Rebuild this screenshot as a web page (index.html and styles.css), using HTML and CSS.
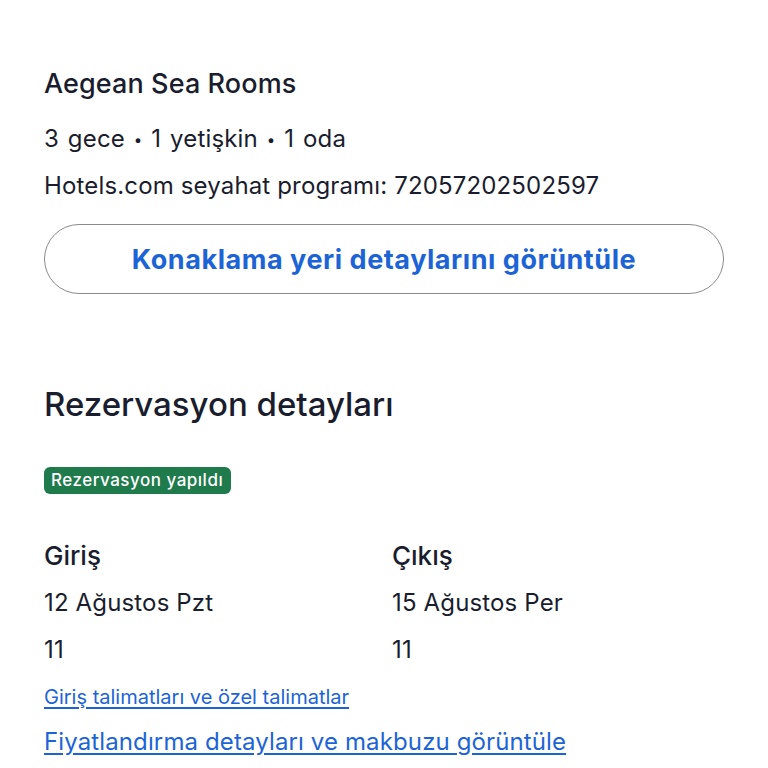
FILE: index.html
```html
<!DOCTYPE html>
<html lang="tr">

<head>
    <title>Rezervasyon | Aegean Sea Rooms</title>
    <meta name="viewport" content="width=device-width, initial-scale=1">
    <link rel="stylesheet" href="styles.css">
</head>

<body>

    <div class="page">
        <div class="stay">
            <h1 class="hotel-name">Aegean Sea Rooms</h1>
            <p class="stay-summary">3 gece <span class="dot">&bull;</span> 1 yetişkin <span class="dot">&bull;</span> 1 oda</p>
            <p class="itinerary">Hotels.com seyahat programı: 72057202502597</p>
            <button type="button" class="outline-button">Konaklama yeri detaylarını görüntüle</button>
        </div>

        <div class="booking">
            <h2 class="section-title">Rezervasyon detayları</h2>
            <span class="status-badge">Rezervasyon yapıldı</span>

            <div class="dates-grid">
                <div class="date-col">
                    <div class="date-label">Giriş</div>
                    <div class="date-value">12 Ağustos Pzt</div>
                    <div class="date-value">11</div>
                </div>
                <div class="date-col">
                    <div class="date-label">Çıkış</div>
                    <div class="date-value">15 Ağustos Per</div>
                    <div class="date-value">11</div>
                </div>
            </div>

            <a href="#" class="link small-link">Giriş talimatları ve özel talimatlar</a>
            <a href="#" class="link big-link">Fiyatlandırma detayları ve makbuzu görüntüle</a>
        </div>
    </div>

</body>

</html>
```

FILE: styles.css
```css
body {
    margin: 0;
    background-color: #fff;
    color: #1a1d2e;
    font-family: Inter, "Noto Sans", sans-serif;
}

.page {
    padding: 62px 44px 0 44px;
}

.hotel-name {
    margin: 0;
    font-size: 27px;
    font-weight: 500;
    line-height: 44px;
    letter-spacing: 0.1px;
}

.stay-summary,
.itinerary {
    margin: 0;
    font-size: 24px;
    line-height: 46px;
    letter-spacing: 0.15px;
}

.stay-summary {
    margin-top: 10px;
    word-spacing: 2px;
}

.dot {
    font-size: 15px;
    vertical-align: 2px;
}

.outline-button {
    display: block;
    width: 100%;
    height: 70px;
    margin-top: 15px;
    background-color: #fff;
    border: 1.5px solid #8a8a8e;
    border-radius: 35px;
    color: #1c64d6;
    font-family: inherit;
    font-size: 27px;
    font-weight: 700;
    letter-spacing: 0.55px;
    cursor: pointer;
}

.section-title {
    margin: 88px 0 0 0;
    font-size: 33px;
    font-weight: 500;
    line-height: 44px;
}

.status-badge {
    display: inline-block;
    margin-top: 41px;
    padding: 0 8px 0 7px;
    height: 27px;
    line-height: 27px;
    background-color: #1f7a4c;
    border-radius: 6px;
    color: #fff;
    font-size: 17px;
    font-weight: 500;
    letter-spacing: 0.5px;
}

.dates-grid {
    display: grid;
    grid-template-columns: 348px auto;
    margin-top: 38px;
}

.date-label {
    font-size: 26px;
    font-weight: 500;
    line-height: 47px;
}

.date-value {
    font-size: 24px;
    line-height: 47px;
    letter-spacing: 0.15px;
}

.link {
    display: block;
    color: #1c64d6;
    text-decoration: underline;
    text-underline-offset: 3px;
}

.small-link {
    font-size: 20px;
    line-height: 46px;
    margin-top: 1px;
}

.big-link {
    font-size: 24px;
    line-height: 44px;
    letter-spacing: 0.12px;
}
```
